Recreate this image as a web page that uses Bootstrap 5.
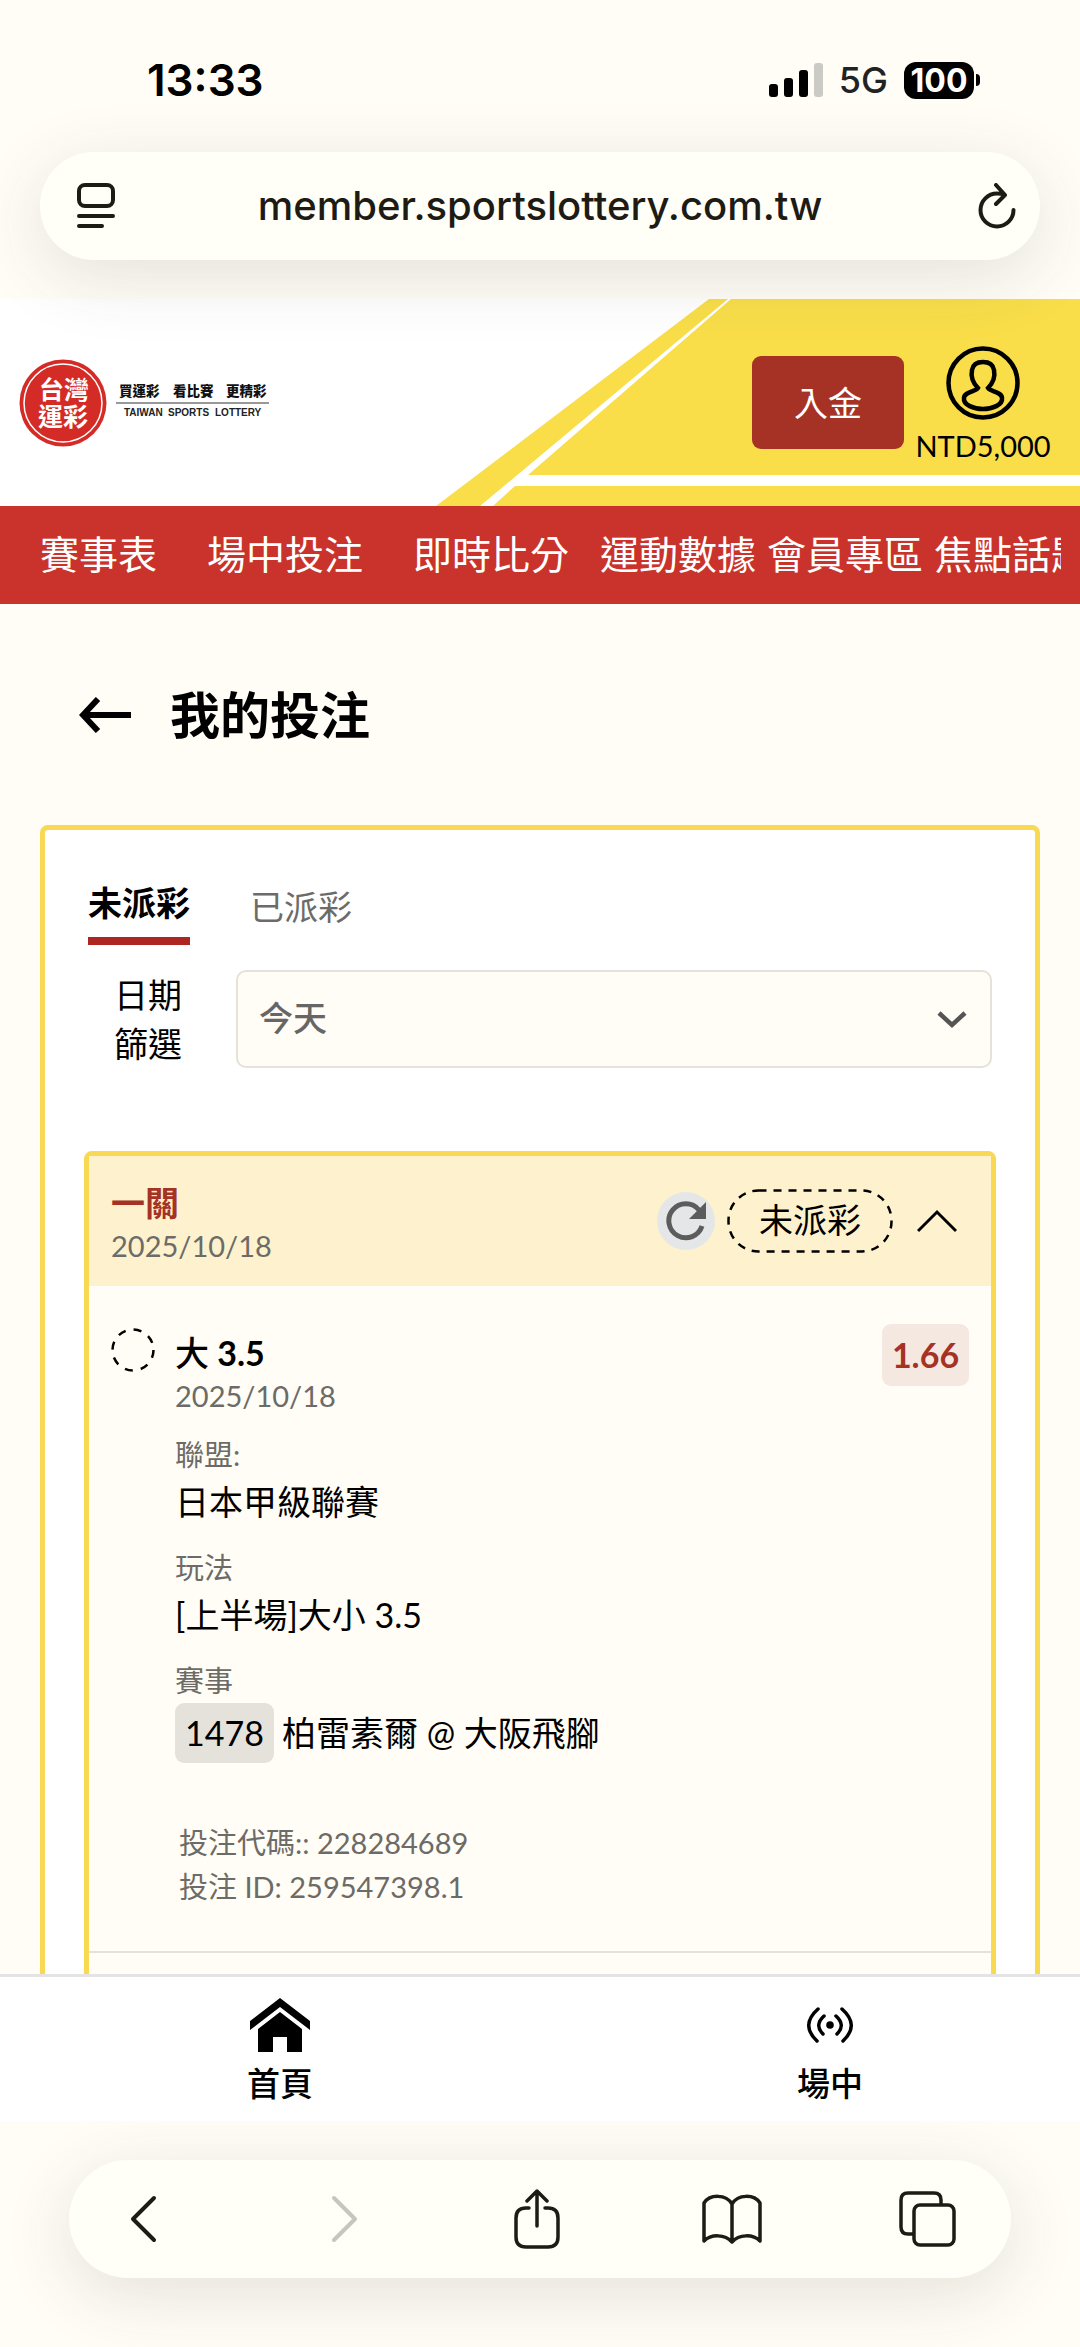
<!DOCTYPE html>
<html lang="zh-Hant">
<head>
<meta charset="utf-8">
<meta name="viewport" content="width=device-width, initial-scale=1">
<title>我的投注</title>
<link href="https://cdn.jsdelivr.net/npm/bootstrap@5.3.0/dist/css/bootstrap.min.css" rel="stylesheet">
<style>
:root{--cream:#fffdf5;--gold:#f9d853;--brick:#a63225;--grey:#6c6b67}
body{background:var(--cream);color:#000;font-family:Lato,"Noto Sans CJK TC",sans-serif;font-size:34px;line-height:50px;min-height:100vh}
button{color:inherit}
svg{display:block;flex:none}
.ui-font{font-family:Inter,sans-serif}
.screen{height:100vh;overflow:hidden}
/* browser chrome */
.status-bar{height:152px;padding:8px 100px 0 147px}
.clock{font-size:44px;font-weight:600}
.network{font-size:36px;font-weight:500;color:#222}
.battery{background:#000;color:#fff;border-radius:12px;width:70px;height:37px;font-size:32px;font-weight:700;line-height:37px}
.battery-tip{width:4px;height:12px;border-radius:0 4px 4px 0;background:#000;margin-left:2px}
.glass{background:#fffff8;border-radius:60px;box-shadow:0 16px 70px rgba(60,60,50,.14)}
.address{height:108px;margin:0 40px;padding:0 24px 0 37px;position:relative;z-index:2}
.address-field{font-size:40px;font-weight:500;color:#1d1b14;line-height:48px;margin-right:13px}
.address-field:focus{outline:0}
/* site header */
.site-head{margin-top:39px;height:207px;background:#fff;position:relative;padding:0 28px 0 19px}
.head-art{position:absolute;top:0;right:0;height:100%}
.head-row{position:relative;height:100%}
.head-actions{gap:10px}
.btn-deposit,.btn-deposit:hover{background:var(--brick);color:#fff;border:0;border-radius:9px;width:152px;height:93px;font-size:34px}
.account{font-size:29px;line-height:36px;color:#000;width:138px;padding-top:4px}
.main-nav{background:#c9332b;height:98px;padding:0 19px 0 40px}
.main-nav ul{overflow:hidden;gap:11px}
.main-nav a{color:#fff;font-size:39px;white-space:nowrap}
.wide-item{padding-right:39px}
.mid-item{padding-right:20px}
/* page */
.page-title{font-size:50px;line-height:60px;font-weight:700}
.title-row{padding:81px 79px 80px;gap:39px}
.bet-panel{border:5px solid var(--gold);border-radius:8px;background:#fff;margin:0 40px;padding:48px 43px 0}
.tab-row{gap:60px;height:67px}
.tab-row button{border:0;background:none;padding:0;line-height:50px;height:67px;display:flex;align-items:flex-start}
.tab-row .tab-on{font-weight:700;border-bottom:8px solid #ad2622}
.tab-row .tab-off{color:var(--grey);padding-top:4px}
.filter-row{padding:25px 0 83px 26px;gap:52px}
.filter-label{line-height:49px;flex:none;width:70px}
.filter-row .day-select{background-color:var(--cream);border:2px solid #e6e1da;border-radius:10px;height:98px;font-size:34px;font-weight:500;color:#666;padding:0 21px 4px;
 background-image:url("data:image/svg+xml,%3Csvg xmlns='http://www.w3.org/2000/svg' viewBox='0 0 32 20'%3E%3Cpath d='M3 4l13 12L29 4' fill='none' stroke='%23555' stroke-width='4.5'/%3E%3C/svg%3E");background-size:32px 20px;background-position:right 22px center}
.slip{border:5px solid var(--gold);border-radius:8px;background:var(--cream);margin:0 -4px}
.slip-head{background:#fdf2cd;height:130px;padding:0 34px 0 22px}
.slip-name{color:var(--brick);font-weight:700;line-height:42px}
.note{font-size:29px;line-height:44px;color:var(--grey)}
.round-btn{width:58px;height:58px;border-radius:50%;background:#e5e6e8;border:0;padding:0}
.state-pill{width:166px;height:64px}
.state-pill span{position:absolute;inset:0;line-height:62px;text-align:center}
.slip-body{padding:38px 22px 42px;gap:20px}
.pick{line-height:42px}
.pick span{font-weight:500}
.odds{background:#f5e8e0;color:var(--brick);border-radius:9px;font-weight:700;width:87px;height:62px;line-height:62px;text-align:center}
.match-code{background:#e5e2dc;border-radius:9px;width:99px;height:60px;line-height:60px;font-size:34px;text-align:center}
.slip-foot{border-top:2px solid #e6e1da;height:400px}
.bet-fields{margin-top:15px;gap:19px}
.bet-codes{margin-top:58px}
/* bottom bars */
.bottom-stack{z-index:5}
.site-tabs{background:#fff;border-top:3px solid #e4e4e4;height:147px;padding:4px 217px 0 247px}
.site-tabs a{color:#000;font-weight:500;font-size:33px;line-height:48px}
.tab-icon{height:60px}
.tool-zone{background:var(--cream);padding:39px 69px 69px;overflow:hidden}
.tool-bar{height:118px;padding:0 55px 0 48px}
.tool-bar button{border:0;background:none;padding:0}
</style>
</head>
<body>
<div class="screen d-flex flex-column position-relative">
  <div class="status-bar ui-font d-flex justify-content-between align-items-center flex-shrink-0">
    <span class="clock">13:33</span>
    <span class="d-flex align-items-center">
      <svg width="54" height="34" viewBox="0 0 54 34"><g><rect y="21" width="9" height="13" rx="3"/><rect x="15" y="15" width="9" height="19" rx="3"/><rect x="30" y="7" width="9" height="27" rx="3"/><rect x="45" width="9" height="34" rx="3" fill="#cbcac5"/></g></svg>
      <span class="network ms-3 me-3">5G</span>
      <span class="battery text-center">100</span><span class="battery-tip"></span>
    </span>
  </div>
  <div class="address glass ui-font d-flex align-items-center justify-content-between flex-shrink-0">
    <svg width="38" height="46" viewBox="0 0 38 46" fill="none" stroke="#1d1b14" stroke-width="4" stroke-linecap="round"><rect x="2" y="2" width="34" height="21" rx="6"/><path d="M2 33H36M2 43H25"/></svg>
    <input class="address-field border-0 bg-transparent text-center flex-fill p-0" aria-label="網址" value="member.sportslottery.com.tw">
    <svg width="38" height="46" viewBox="0 0 38 46" fill="none" stroke="#1d1b14" stroke-width="4" stroke-linecap="round" stroke-linejoin="round"><path d="M27 12Q23 10.500 19 10.500A16.500 16.500 0 1 0 35.500 27M18 2l9 10-9 9"/></svg>
  </div>

  <header class="site-head flex-shrink-0">
    <svg class="head-art" width="644" height="207" viewBox="436 299 644 207"><path fill="#f9de4a" d="M709 299H728L480 506H436ZM731 299H1080V475H528ZM515 486H1080V506H493Z"/></svg>
    <div class="head-row d-flex align-items-center justify-content-between">
      <svg width="252" height="88" viewBox="0 0 252 88" role="img" aria-label="台灣運彩">
        <circle cx="44" cy="44" r="43.500" fill="#d52b26"/><circle cx="44" cy="44" r="39" fill="none" stroke="#fff" stroke-width="1.500"/>
        <g fill="#fff" font-family="Noto Sans CJK TC,sans-serif" font-weight="700" font-size="25" text-anchor="middle"><text x="45" y="40">台灣</text><text x="44" y="67">運彩</text></g>
        <g fill="#111" font-family="Noto Sans CJK TC,sans-serif" font-weight="900" font-size="13.500"><text x="100" y="37">買運彩</text><text x="154" y="37">看比賽</text><text x="207" y="37">更精彩</text></g>
        <path d="M97 44H250" stroke="#999" stroke-width="2"/>
        <g fill="#222" font-family="Liberation Sans,sans-serif" font-weight="700" font-size="10"><text x="105" y="57">TAIWAN</text><text x="149" y="57">SPORTS</text><text x="196" y="57">LOTTERY</text></g>
      </svg>
      <div class="head-actions d-flex align-items-center">
        <button class="btn-deposit">入金</button>
        <a href="#" class="account text-decoration-none d-flex flex-column align-items-center">
          <svg class="mb-2" width="74" height="74" viewBox="0 0 74 74" fill="none" stroke="#000" stroke-width="4.500"><circle cx="37" cy="37" r="34.500"/><path d="M32 42C26 36 25 29 26 24C27 18 31 16 37 16S47 18 48 24C49 29 48 36 42 42C43 45 56 46 56 52C57 59 46 63 37 63S17 59 18 52C18 46 31 45 32 42Z"/></svg>
          NTD5,000
        </a>
      </div>
    </div>
  </header>
  <nav class="main-nav flex-shrink-0 d-flex align-items-center">
    <ul class="list-unstyled d-flex m-0 w-100">
      <li class="wide-item"><a href="#" class="text-decoration-none">賽事表</a></li>
      <li class="wide-item"><a href="#" class="text-decoration-none">場中投注</a></li>
      <li class="mid-item"><a href="#" class="text-decoration-none">即時比分</a></li>
      <li><a href="#" class="text-decoration-none">運動數據</a></li>
      <li><a href="#" class="text-decoration-none">會員專區</a></li>
      <li><a href="#" class="text-decoration-none">焦點話題</a></li>
    </ul>
  </nav>

  <main class="flex-shrink-0">
    <div class="title-row d-flex align-items-center">
      <a href="#" aria-label="返回"><svg width="52" height="36" viewBox="0 0 52 36" fill="none" stroke="#000" stroke-width="6"><path d="M4 18H52M19 2L4 18L19 34"/></svg></a>
      <h1 class="page-title m-0">我的投注</h1>
    </div>
    <section class="bet-panel">
      <div class="tab-row d-flex">
        <button class="tab-on">未派彩</button>
        <button class="tab-off">已派彩</button>
      </div>
      <div class="filter-row d-flex">
        <label class="filter-label" for="day">日期<br>篩選</label>
        <select class="form-select day-select flex-fill" id="day"><option>今天</option></select>
      </div>
      <article class="slip">
        <div class="slip-head d-flex align-items-center justify-content-between">
          <div class="pt-2"><div class="slip-name">一關</div><div class="note">2025/10/18</div></div>
          <div class="d-flex align-items-center">
            <button class="round-btn d-flex align-items-center justify-content-center me-2" aria-label="重新整理"><svg width="42" height="42" viewBox="0 0 42 42"><path d="M34 10A17 17 0 1 0 37 26" fill="none" stroke="#5c5c5c" stroke-width="5"/><path d="M41 2V19H24Z" fill="#5c5c5c"/></svg></button>
            <div class="state-pill position-relative ms-1"><svg width="166" height="64" fill="none" stroke="#000" stroke-width="2.500"><rect x="1.500" y="1.500" width="163" height="61" rx="30" stroke-dasharray="8 7"/></svg><span>未派彩</span></div>
            <button class="border-0 bg-transparent p-0 ms-4" aria-label="收合"><svg width="40" height="24" viewBox="0 0 40 24" fill="none" stroke="#000" stroke-width="3"><path d="M1 22L20 3L39 22"/></svg></button>
          </div>
        </div>
        <div class="slip-body d-flex align-items-start">
          <svg class="mt-1" width="44" height="44" viewBox="0 0 44 44" fill="none" stroke="#000" stroke-width="2.500"><circle cx="22" cy="22" r="20.500" stroke-dasharray="8 8.100"/></svg>
          <div class="flex-fill">
            <div class="pick fw-bold pt-2"><span>大</span> 3.5</div>
            <div class="note">2025/10/18</div>
            <div class="bet-fields d-flex flex-column">
              <div><div class="note">聯盟:</div><div>日本甲級聯賽</div></div>
              <div><div class="note">玩法</div><div>[上半場]大小 3.5</div></div>
              <div><div class="note">賽事</div><div class="d-flex align-items-center"><span class="match-code me-2">1478</span><span>柏雷素爾 @ 大阪飛腳</span></div></div>
            </div>
            <div class="note bet-codes ps-1">投注代碼:: 228284689<br>投注 ID: 259547398.1</div>
          </div>
          <span class="odds">1.66</span>
        </div>
        <div class="slip-foot"></div>
      </article>
    </section>
  </main>

  <div class="bottom-stack position-absolute bottom-0 start-0 end-0">
    <nav class="site-tabs d-flex justify-content-between align-items-center">
      <a href="#" class="text-decoration-none d-flex flex-column align-items-center gap-1"><span class="tab-icon d-flex align-items-center"><svg width="60" height="54" viewBox="0 0 60 54"><path d="M30 0L60 23V32L30 9L0 32V23Z"/><path d="M30 14L52 31V54H37V39H23V54H8V31Z"/></svg></span>首頁</a>
      <a href="#" class="text-decoration-none d-flex flex-column align-items-center gap-1"><span class="tab-icon d-flex align-items-center"><svg width="46" height="38" viewBox="0 0 46 38" fill="none" stroke="#000" stroke-width="3.500" stroke-linecap="round"><circle cx="23" cy="19" r="3.800" fill="#000" stroke="none"/><path d="M11 3Q-7 19 10 35M35 3Q53 19 36 35M17 10Q7 19 16 28M29 10Q39 19 30 28"/></svg></span>場中</a>
    </nav>
    <div class="tool-zone">
      <div class="tool-bar glass d-flex align-items-center justify-content-between">
        <button aria-label="上一頁"><svg width="54" height="60" viewBox="0 0 54 60" fill="none" stroke="#1d1b14" stroke-width="4" stroke-linecap="round" stroke-linejoin="round"><path d="M37 9L16 30L37 51"/></svg></button>
        <button aria-label="下一頁" disabled><svg width="64" height="60" viewBox="0 0 64 60" fill="none" stroke="#c6c5c0" stroke-width="4" stroke-linecap="round" stroke-linejoin="round"><path d="M25 9L46 30L25 51"/></svg></button>
        <button aria-label="分享"><svg width="50" height="60" viewBox="-4 0 50 60" fill="none" stroke="#1d1b14" stroke-width="3.500" stroke-linecap="round" stroke-linejoin="round"><path d="M23 37V2M13 12L23 2L33 12M15 19H12Q2 19 2 29V48Q2 58 12 58H34Q44 58 44 48V29Q44 19 34 19H31"/></svg></button>
        <button aria-label="書籤"><svg width="64" height="60" viewBox="-4 0 64 60" fill="none" stroke="#1d1b14" stroke-width="3.500" stroke-linejoin="round"><path d="M30 15C24 5 8 5 2 14V52C9 45 23 45 30 53C37 45 51 45 58 52V14C52 5 36 5 30 15V53"/></svg></button>
        <button aria-label="分頁"><svg width="57" height="60" viewBox="0 0 57 60" fill="none" stroke="#1d1b14" stroke-width="3.500" stroke-linejoin="round"><rect x="15" y="16" width="40" height="40" rx="6"/><path d="M15 45H9Q2 45 2 38V11Q2 4 9 4H35Q42 4 42 11V16"/></svg></button>
      </div>
    </div>
  </div>
</div>
<script src="https://cdn.jsdelivr.net/npm/bootstrap@5.3.0/dist/js/bootstrap.bundle.min.js"></script>
</body>
</html>
